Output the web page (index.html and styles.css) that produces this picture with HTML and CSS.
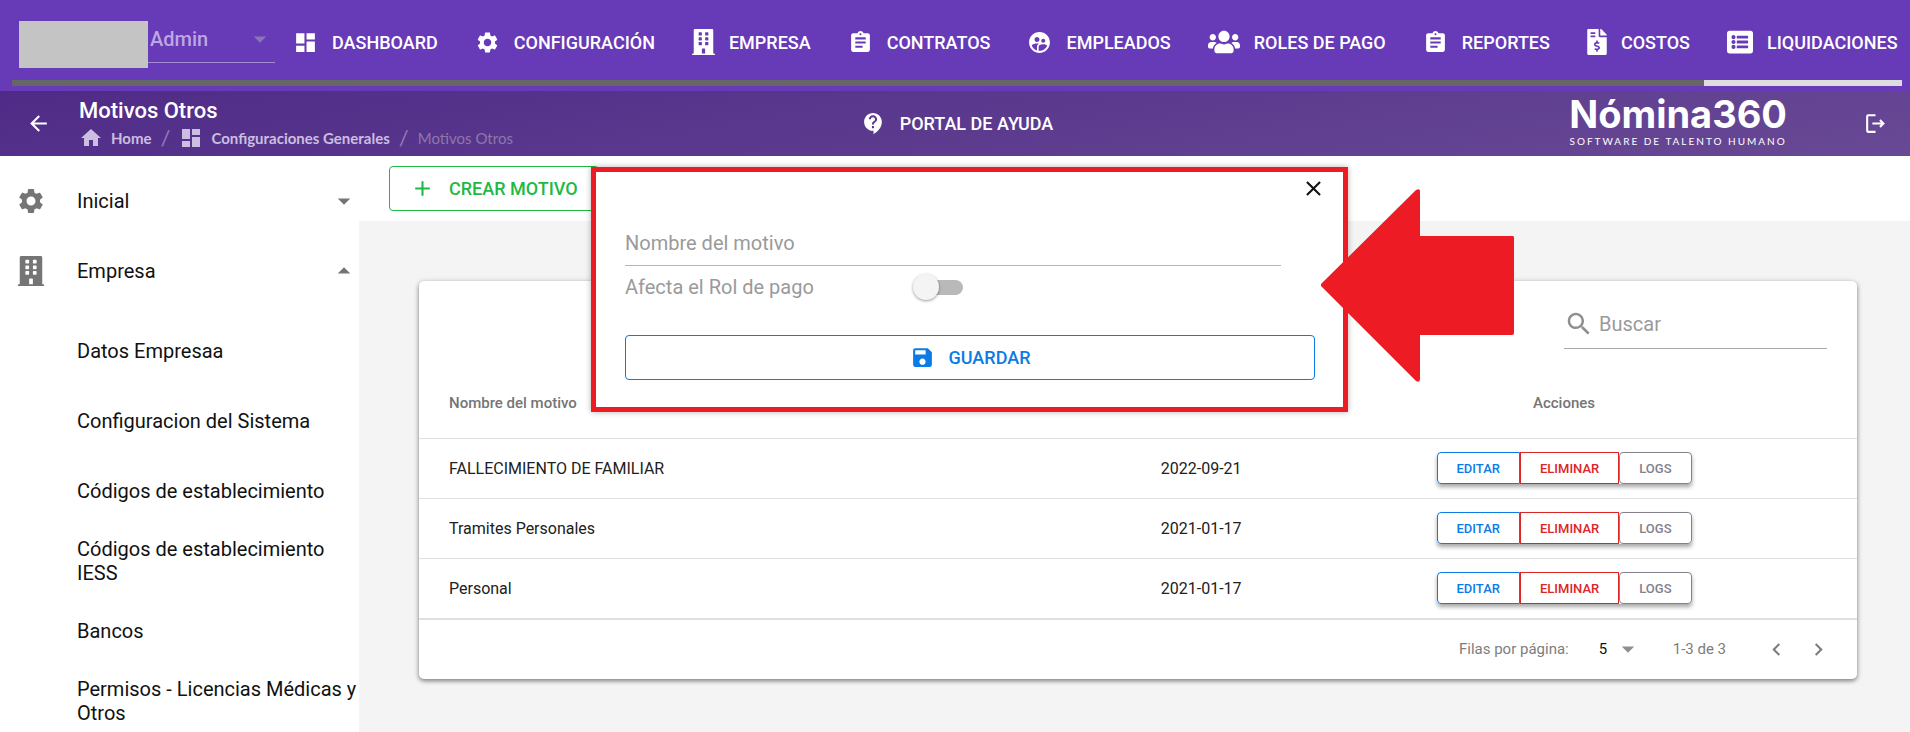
FILE: index.html
```html
<!DOCTYPE html>
<html lang="es">
<head>
  <meta charset="UTF-8">
  <meta name="viewport" content="width=device-width, initial-scale=1">
  <title>Nómina360 - Motivos Otros</title>
  <link rel="stylesheet" href="styles.css">
</head>
<body>
  <!-- shared icons -->
  <svg class="sprite" aria-hidden="true">
    <symbol id="i-dashboard" viewBox="0 0 24 24"><path d="M3 13h8V3H3v10zm0 8h8v-6H3v6zm10 0h8V11h-8v10zm0-18v6h8V3h-8z"/></symbol>
    <symbol id="i-settings" viewBox="0 0 24 24"><path d="M19.14 12.94c.04-.3.06-.61.06-.94 0-.32-.02-.64-.07-.94l2.03-1.58c.18-.14.23-.41.12-.61l-1.92-3.32c-.12-.22-.37-.29-.59-.22l-2.39.96c-.5-.38-1.03-.7-1.62-.94l-.36-2.54c-.04-.24-.24-.41-.48-.41h-3.84c-.24 0-.43.17-.47.41l-.36 2.54c-.59.24-1.13.57-1.62.94l-2.39-.96c-.22-.08-.47 0-.59.22L2.74 8.87c-.12.21-.08.47.12.61l2.03 1.58c-.05.3-.09.63-.09.94s.02.64.07.94l-2.03 1.58c-.18.14-.23.41-.12.61l1.92 3.32c.12.22.37.29.59.22l2.39-.96c.5.38 1.03.7 1.62.94l.36 2.54c.05.24.24.41.48.41h3.84c.24 0 .44-.17.47-.41l.36-2.54c.59-.24 1.13-.56 1.62-.94l2.39.96c.22.08.47 0 .59-.22l1.92-3.32c.12-.22.07-.47-.12-.61l-2.01-1.58zM12 15.6c-1.98 0-3.6-1.62-3.6-3.6s1.62-3.6 3.6-3.6 3.6 1.62 3.6 3.6-1.62 3.6-3.6 3.6z"/></symbol>
    <symbol id="i-building" viewBox="0 0 448 512"><path d="M436 480h-20V24c0-13.255-10.745-24-24-24H56C42.745 0 32 10.745 32 24v456H12c-6.627 0-12 5.373-12 12v20h448v-20c0-6.627-5.373-12-12-12zM128 76c0-6.627 5.373-12 12-12h40c6.627 0 12 5.373 12 12v40c0 6.627-5.373 12-12 12h-40c-6.627 0-12-5.373-12-12V76zm0 96c0-6.627 5.373-12 12-12h40c6.627 0 12 5.373 12 12v40c0 6.627-5.373 12-12 12h-40c-6.627 0-12-5.373-12-12v-40zm52 148h-40c-6.627 0-12-5.373-12-12v-40c0-6.627 5.373-12 12-12h40c6.627 0 12 5.373 12 12v40c0 6.627-5.373 12-12 12zm76 160h-64v-84c0-6.627 5.373-12 12-12h40c6.627 0 12 5.373 12 12v84zm64-172c0 6.627-5.373 12-12 12h-40c-6.627 0-12-5.373-12-12v-40c0-6.627 5.373-12 12-12h40c6.627 0 12 5.373 12 12v40zm0-96c0 6.627-5.373 12-12 12h-40c-6.627 0-12-5.373-12-12v-40c0-6.627 5.373-12 12-12h40c6.627 0 12 5.373 12 12v40zm0-96c0 6.627-5.373 12-12 12h-40c-6.627 0-12-5.373-12-12V76c0-6.627 5.373-12 12-12h40c6.627 0 12 5.373 12 12v40z"/></symbol>
    <symbol id="i-assignment" viewBox="0 0 24 24"><path d="M19 3h-4.180C14.400 1.840 13.300 1 12 1c-1.300 0-2.400.840-2.820 2H5c-1.100 0-2 .9-2 2v14c0 1.100.9 2 2 2h14c1.100 0 2-.9 2-2V5c0-1.100-.9-2-2-2zm-7 0c.55 0 1 .45 1 1s-.45 1-1 1-1-.45-1-1 .45-1 1-1zm2 14H7v-2h7v2zm3-4H7v-2h10v2zm0-4H7V7h10v2z"/></symbol>
    <symbol id="i-supervised" viewBox="0 0 24 24"><path d="M11.990 2c-5.520 0-10 4.480-10 10s4.480 10 10 10 10-4.480 10-10-4.480-10-10-10zm3.610 6.340c1.070 0 1.930.860 1.930 1.930s-.860 1.930-1.930 1.930-1.930-.860-1.930-1.930c-.010-1.070.860-1.930 1.930-1.930zm-6-1.580c1.300 0 2.360 1.060 2.360 2.360s-1.060 2.360-2.360 2.360-2.360-1.060-2.360-2.360c0-1.310 1.050-2.360 2.360-2.360zm0 9.130v3.750c-2.400-.75-4.300-2.600-5.140-4.960 1.050-1.120 3.670-1.690 5.140-1.690.530 0 1.200.080 1.900.220-1.640.870-1.900 2.020-1.900 2.680zM11.990 20c-.270 0-.530-.010-.790-.040v-4.070c0-1.420 2.940-2.130 4.400-2.130 1.070 0 2.920.390 3.840 1.150-1.170 2.970-4.060 5.090-7.450 5.090z"/></symbol>
    <symbol id="i-users" viewBox="0 0 640 512"><path d="M96 224c35.300 0 64-28.700 64-64s-28.700-64-64-64-64 28.700-64 64 28.700 64 64 64zm448 0c35.300 0 64-28.700 64-64s-28.700-64-64-64-64 28.700-64 64 28.700 64 64 64zm32 32h-64c-17.600 0-33.500 7.100-45.100 18.600 40.300 22.100 68.900 62 75.100 109.400h66c17.700 0 32-14.300 32-32v-32c0-35.300-28.700-64-64-64zm-256 0c61.900 0 112-50.100 112-112S381.900 32 320 32 208 82.100 208 144s50.100 112 112 112zm76.800 32h-8.300c-20.800 10-43.900 16-68.500 16s-47.600-6-68.500-16h-8.300C179.600 288 128 339.600 128 403.200V432c0 26.500 21.500 48 48 48h288c26.500 0 48-21.500 48-48v-28.800c0-63.600-51.600-115.200-115.200-115.200zm-223.700-13.400C161.500 263.100 145.600 256 128 256H64c-35.300 0-64 28.700-64 64v32c0 17.700 14.300 32 32 32h65.900c6.300-47.400 34.900-87.300 75.200-109.400z"/></symbol>
    <symbol id="i-invoice" viewBox="0 0 384 512"><path d="M377 105L279.100 7c-4.500-4.500-10.600-7-17-7H256v128h128v-6.100c0-6.300-2.500-12.400-7-16.900zm-153 31V0H24C10.700 0 0 10.700 0 24v464c0 13.300 10.700 24 24 24h336c13.300 0 24-10.700 24-24V160H248c-13.200 0-24-10.800-24-24zM64 72c0-4.420 3.580-8 8-8h80c4.420 0 8 3.580 8 8v16c0 4.420-3.580 8-8 8H72c-4.420 0-8-3.580-8-8V72zm0 80v-16c0-4.420 3.580-8 8-8h80c4.420 0 8 3.580 8 8v16c0 4.420-3.580 8-8 8H72c-4.420 0-8-3.580-8-8zm144 263.880V440c0 4.420-3.580 8-8 8h-16c-4.420 0-8-3.580-8-8v-24.290c-11.290-.58-22.270-4.520-31.370-11.350-3.900-2.930-4.100-8.770-.57-12.140l11.750-11.210c2.770-2.640 6.890-2.760 10.130-.73 3.870 2.420 8.260 3.720 12.820 3.720h28.110c6.500 0 11.800-5.920 11.800-13.190 0-5.950-3.610-11.190-8.770-12.730l-45-13.500c-18.590-5.580-31.580-23.420-31.580-43.390 0-24.520 19.050-44.440 42.670-45.070V232c0-4.420 3.580-8 8-8h16c4.420 0 8 3.580 8 8v24.290c11.290.58 22.270 4.510 31.370 11.350 3.900 2.930 4.100 8.770.57 12.140l-11.750 11.210c-2.770 2.640-6.890 2.760-10.130.73-3.870-2.430-8.260-3.720-12.820-3.720h-28.110c-6.500 0-11.800 5.920-11.800 13.190 0 5.950 3.610 11.190 8.770 12.730l45 13.500c18.590 5.580 31.580 23.420 31.580 43.390 0 24.530-19.050 44.440-42.670 45.070z"/></symbol>
    <symbol id="i-listalt" viewBox="0 0 512 512"><path d="M464 480H48c-26.510 0-48-21.490-48-48V80c0-26.510 21.490-48 48-48h416c26.510 0 48 21.490 48 48v352c0 26.510-21.490 48-48 48zM128 120c-22.091 0-40 17.909-40 40s17.909 40 40 40 40-17.909 40-40-17.909-40-40-40zm0 96c-22.091 0-40 17.909-40 40s17.909 40 40 40 40-17.909 40-40-17.909-40-40-40zm0 96c-22.091 0-40 17.909-40 40s17.909 40 40 40 40-17.909 40-40-17.909-40-40-40zm288-136v-32c0-6.627-5.373-12-12-12H204c-6.627 0-12 5.373-12 12v32c0 6.627 5.373 12 12 12h200c6.627 0 12-5.373 12-12zm0 96v-32c0-6.627-5.373-12-12-12H204c-6.627 0-12 5.373-12 12v32c0 6.627 5.373 12 12 12h200c6.627 0 12-5.373 12-12zm0 96v-32c0-6.627-5.373-12-12-12H204c-6.627 0-12 5.373-12 12v32c0 6.627 5.373 12 12 12h200c6.627 0 12-5.373 12-12z"/></symbol>
    <symbol id="i-back" viewBox="0 0 24 24"><path d="M20 11H7.830l5.590-5.590L12 4l-8 8 8 8 1.410-1.410L7.830 13H20v-2z"/></symbol>
    <symbol id="i-home" viewBox="0 0 24 24"><path d="M10 20v-6h4v6h5v-8h3L12 3 2 12h3v8z"/></symbol>
    <symbol id="i-help" viewBox="0 0 24 24"><path d="M11.500 2C6.810 2 3 5.810 3 10.500S6.810 19 11.500 19h.5v3c4.860-2.340 8-7 8-11.500C20 5.810 16.190 2 11.500 2zm1 14.500h-2v-2h2v2zm0-3.500h-2c0-3.250 3-3 3-5 0-1.100-.9-2-2-2s-2 .9-2 2h-2c0-2.210 1.790-4 4-4s4 1.790 4 4c0 2.500-3 2.750-3 5z"/></symbol>
    <symbol id="i-logout" viewBox="0 0 24 24"><path d="M17 8l-1.410 1.410L17.170 11H9v2h8.170l-1.580 1.580L17 16l4-4zM5 5h7V3H5c-1.100 0-2 .9-2 2v14c0 1.100.9 2 2 2h7v-2H5V5z"/></symbol>
    <symbol id="i-down" viewBox="0 0 24 24"><path d="M7 10l5 5 5-5z"/></symbol>
    <symbol id="i-up" viewBox="0 0 24 24"><path d="M7 14l5-5 5 5z"/></symbol>
    <symbol id="i-add" viewBox="0 0 24 24"><path d="M19 13h-6v6h-2v-6H5v-2h6V5h2v6h6v2z"/></symbol>
    <symbol id="i-close" viewBox="0 0 24 24"><path d="M19 6.410L17.590 5 12 10.590 6.410 5 5 6.410 10.590 12 5 17.590 6.410 19 12 13.410 17.590 19 19 17.590 13.410 12z"/></symbol>
    <symbol id="i-save" viewBox="0 0 24 24"><path d="M17 3H5c-1.110 0-2 .9-2 2v14c0 1.100.890 2 2 2h14c1.100 0 2-.9 2-2V7l-4-4zm-5 16c-1.660 0-3-1.340-3-3s1.340-3 3-3 3 1.340 3 3-1.340 3-3 3zm3-10H5V5h10v4z"/></symbol>
    <symbol id="i-search" viewBox="0 0 24 24"><path d="M15.500 14h-.790l-.280-.270C15.410 12.590 16 11.110 16 9.500 16 5.910 13.090 3 9.500 3S3 5.910 3 9.500 5.910 16 9.500 16c1.610 0 3.090-.590 4.230-1.570l.270.280v.790l5 4.990L20.490 19l-4.990-5zm-6 0C7.010 14 5 11.990 5 9.500S7.010 5 9.500 5 14 7.010 14 9.500 11.990 14 9.500 14z"/></symbol>
    <symbol id="i-left" viewBox="0 0 24 24"><path d="M15.410 7.410L14 6l-6 6 6 6 1.410-1.410L10.830 12z"/></symbol>
    <symbol id="i-right" viewBox="0 0 24 24"><path d="M10 6L8.590 7.410 13.170 12l-4.580 4.590L10 18l6-6z"/></symbol>
  </svg>

  <header>
    <div class="topbar">
      <div class="company">
        <span class="company-name"></span>
        <div class="select-wrap">
          <select class="role-select" aria-label="Rol" disabled><option>Admin</option></select>
          <svg class="icon caret"><use href="#i-down"/></svg>
        </div>
      </div>
      <nav class="menu">
        <a href="#"><svg class="icon"><use href="#i-dashboard"/></svg>DASHBOARD</a>
        <a href="#"><svg class="icon"><use href="#i-settings"/></svg>CONFIGURACIÓN</a>
        <a href="#"><svg class="icon fa-building"><use href="#i-building"/></svg>EMPRESA</a>
        <a href="#"><svg class="icon"><use href="#i-assignment"/></svg>CONTRATOS</a>
        <a href="#"><svg class="icon"><use href="#i-supervised"/></svg>EMPLEADOS</a>
        <a href="#"><svg class="icon fa-users"><use href="#i-users"/></svg>ROLES DE PAGO</a>
        <a href="#"><svg class="icon"><use href="#i-assignment"/></svg>REPORTES</a>
        <a href="#"><svg class="icon fa-invoice"><use href="#i-invoice"/></svg>COSTOS</a>
        <a href="#"><svg class="icon fa-list"><use href="#i-listalt"/></svg>LIQUIDACIONES</a>
      </nav>
    </div>
    <div class="scroll-track"><div class="scroll-thumb"></div></div>

    <div class="subbar">
      <div class="left">
        <button class="icon-btn" aria-label="Volver"><svg class="icon"><use href="#i-back"/></svg></button>
        <div class="heading">
          <h1>Motivos Otros</h1>
          <nav class="breadcrumb">
            <a href="#"><svg class="icon"><use href="#i-home"/></svg>Home</a>
            <span class="sep">/</span>
            <a href="#"><svg class="icon"><use href="#i-dashboard"/></svg>Configuraciones Generales</a>
            <span class="sep">/</span>
            <span class="current">Motivos Otros</span>
          </nav>
        </div>
      </div>
      <a class="help" href="#"><svg class="icon"><use href="#i-help"/></svg>PORTAL DE AYUDA</a>
      <div class="right">
        <div class="logo">
          <span class="logo-name">Nómina360</span>
          <span class="logo-tag">SOFTWARE DE TALENTO HUMANO</span>
        </div>
        <button class="icon-btn" aria-label="Salir"><svg class="icon"><use href="#i-logout"/></svg></button>
      </div>
    </div>
  </header>

  <div class="layout">
    <aside class="sidebar">
      <button class="group"><svg class="icon"><use href="#i-settings"/></svg><span>Inicial</span><svg class="icon caret"><use href="#i-down"/></svg></button>
      <button class="group"><svg class="icon"><use href="#i-building"/></svg><span>Empresa</span><svg class="icon caret"><use href="#i-up"/></svg></button>
      <ul>
        <li><a href="#">Datos Empresaa</a></li>
        <li><a href="#">Configuracion del Sistema</a></li>
        <li><a href="#">Códigos de establecimiento</a></li>
        <li><a href="#">Códigos de establecimiento IESS</a></li>
        <li><a href="#">Bancos</a></li>
        <li><a href="#">Permisos - Licencias Médicas y Otros</a></li>
      </ul>
    </aside>

    <main>
      <div class="toolbar">
        <button class="btn create"><svg class="icon"><use href="#i-add"/></svg>CREAR MOTIVO</button>
      </div>
      <section class="card">
        <div class="card-head">
          <label class="search">
            <svg class="icon"><use href="#i-search"/></svg>
            <input type="text" placeholder="Buscar" aria-label="Buscar">
          </label>
        </div>
        <table>
          <thead>
            <tr><th class="col-name">Nombre del motivo</th><th class="col-date"></th><th class="col-actions">Acciones</th></tr>
          </thead>
          <tbody>
            <tr>
              <td>FALLECIMIENTO DE FAMILIAR</td>
              <td>2022-09-21</td>
              <td><div class="btn-group"><button class="edit">EDITAR</button><button class="delete">ELIMINAR</button><button class="logs">LOGS</button></div></td>
            </tr>
            <tr>
              <td>Tramites Personales</td>
              <td>2021-01-17</td>
              <td><div class="btn-group"><button class="edit">EDITAR</button><button class="delete">ELIMINAR</button><button class="logs">LOGS</button></div></td>
            </tr>
            <tr>
              <td>Personal</td>
              <td>2021-01-17</td>
              <td><div class="btn-group"><button class="edit">EDITAR</button><button class="delete">ELIMINAR</button><button class="logs">LOGS</button></div></td>
            </tr>
          </tbody>
        </table>
        <div class="pagination">
          <label for="rows">Filas por página:</label>
          <div class="select-wrap">
            <select id="rows"><option>5</option><option>10</option><option>25</option></select>
            <svg class="icon caret"><use href="#i-down"/></svg>
          </div>
          <span class="range">1-3 de 3</span>
          <button class="icon-btn" aria-label="Anterior"><svg class="icon"><use href="#i-left"/></svg></button>
          <button class="icon-btn" aria-label="Siguiente"><svg class="icon"><use href="#i-right"/></svg></button>
        </div>
      </section>
    </main>
  </div>

  <div class="modal" role="dialog" aria-label="Crear motivo">
    <button class="icon-btn close" aria-label="Cerrar"><svg class="icon"><use href="#i-close"/></svg></button>
    <form>
      <input class="name-input" type="text" placeholder="Nombre del motivo" aria-label="Nombre del motivo">
      <div class="switch-row">
        <label for="afecta">Afecta el Rol de pago</label>
        <input id="afecta" class="switch" type="checkbox">
      </div>
      <button class="btn save" type="button"><svg class="icon"><use href="#i-save"/></svg>GUARDAR</button>
    </form>
    <svg class="arrow" viewBox="0 0 193 193" aria-hidden="true"><path d="M0 95L95 1Q99 -1 99 2V47H192Q193 47 193 49V144Q193 146 191 146H99V190Q99 194 95 192L0 97z"/></svg>
  </div>
</body>
</html>
```
FILE: styles.css
```css
* {
  box-sizing: border-box;
}
body {
  margin: 0;
  min-height: 100vh;
  display: flex;
  flex-direction: column;
  font-family: Roboto, "Liberation Sans", sans-serif;
  font-size: 16px;
  color: #212121;
  background: #f4f4f4;
  overflow: hidden;
}
a {
  color: inherit;
  text-decoration: none;
}
button, input, select {
  font: inherit;
  color: inherit;
  margin: 0;
  padding: 0;
  border: 0;
  background: none;
}
button {
  cursor: pointer;
}
.sprite {
  display: none;
}
.icon {
  width: 25px;
  height: 25px;
  flex: none;
  fill: currentColor;
}
.icon-btn {
  display: flex;
}

/* top bar */
.topbar {
  display: flex;
  align-items: flex-start;
  height: 80px;
  padding-left: 19px;
  background: #673ab7;
  color: #fff;
}
.company {
  display: flex;
  margin-top: 21px;
  margin-right: 18px;
  flex: none;
}
.company-name {
  width: 129px;
  height: 47px;
  background: #c4c4c4;
}
.select-wrap {
  position: relative;
  display: flex;
  align-items: center;
}
.select-wrap .caret {
  position: absolute;
  right: 0;
  width: 30px;
  height: 30px;
  pointer-events: none;
}
select {
  appearance: none;
  opacity: 1;
}
.role-select {
  width: 127px;
  height: 42px;
  padding: 0 0 6px 2px;
  border-bottom: 1px solid #a48bd0;
  font-size: 20px;
  font-weight: 500;
  color: #bda7e2;
}
.role-select:disabled {
  opacity: 1;
}
.company .select-wrap {
  height: 42px;
}
.company .caret {
  top: 3px;
  color: #8c75b4;
}
.menu {
  display: flex;
  gap: 37px;
  height: 84px;
}
.menu a {
  display: flex;
  align-items: center;
  gap: 14px;
  font-size: 18px;
  font-weight: 500;
  white-space: nowrap;
}
.fa-building {
  width: 23px;
  height: 26px;
}
.fa-users {
  width: 32px;
  height: 26px;
}
.fa-invoice {
  width: 20px;
  height: 26px;
}
.fa-list {
  width: 26px;
  height: 26px;
}
.scroll-track {
  height: 11px;
  padding: 0 8px 5px 12px;
  background: linear-gradient(#ddd, #ddd) content-box, #673ab7;
}
.scroll-thumb {
  width: 89.5%;
  height: 6px;
  background: #666;
}

/* title bar */
.subbar {
  display: grid;
  grid-template-columns: 1fr auto 1fr;
  align-items: center;
  height: 65px;
  padding: 0 22px 0 26px;
  color: #fff;
  background: linear-gradient(170deg, #4f2b87, #684995);
}
.left {
  display: flex;
  align-items: center;
  gap: 28px;
}
.heading h1 {
  margin: 0;
  font-size: 22px;
  line-height: 28px;
  font-weight: 500;
}
.breadcrumb {
  display: flex;
  align-items: center;
  gap: 9px;
  font-family: Lato, sans-serif;
  font-size: 15px;
  line-height: 26px;
  color: #cbbee0;
}
.breadcrumb a {
  display: flex;
  align-items: center;
  gap: 8px;
  font-weight: 700;
}
.breadcrumb .icon {
  width: 24px;
  height: 24px;
}
.breadcrumb .sep {
  font-size: 22px;
  color: #917bb5;
}
.breadcrumb .current {
  color: #8d78ac;
}
.help {
  display: flex;
  align-items: center;
  gap: 14px;
  font-size: 18px;
  font-weight: 500;
}
.right {
  display: flex;
  justify-content: flex-end;
  align-items: center;
  gap: 76px;
}
.logo {
  display: flex;
  flex-direction: column;
  align-items: center;
  padding-bottom: 4px;
}
.logo-name {
  font-family: Inter, sans-serif;
  font-size: 38px;
  line-height: 38px;
  font-weight: 700;
}
.logo-tag {
  font-family: Lato, sans-serif;
  font-size: 10px;
  line-height: 16px;
  letter-spacing: 2px;
}

/* sidebar */
.layout {
  display: flex;
  flex: 1;
}
.sidebar {
  width: 359px;
  flex: none;
  padding-top: 10px;
  background: #fff;
  font-size: 20px;
  line-height: 24px;
  color: #111;
}
.group {
  display: flex;
  align-items: center;
  width: 100%;
  height: 70px;
  text-align: left;
}
.group .icon {
  width: 30px;
  height: 30px;
  color: #757575;
  margin-left: 16px;
}
.group span {
  flex: 1;
  margin-left: 31px;
}
.group .caret {
  margin: 0;
}
.sidebar ul {
  list-style: none;
  margin: 0;
  padding: 10px 0 0 77px;
}
.sidebar li {
  display: flex;
  align-items: center;
  min-height: 70px;
  padding: 11px 0;
}

/* content */
main {
  flex: 1;
}
.toolbar {
  height: 65px;
  padding: 10px 30px;
  background: #fff;
}
.btn {
  display: flex;
  align-items: center;
  justify-content: center;
  gap: 14px;
  height: 45px;
  border: 1px solid;
  border-radius: 4px;
  font-size: 18px;
  font-weight: 500;
}
.create {
  padding: 0 20px;
  color: #1fb943;
}
.card {
  margin: 60px 53px 0 60px;
  background: #fff;
  border-radius: 5px;
  box-shadow: 0 2px 4px rgba(0, 0, 0, .4), 0 1px 6px rgba(0, 0, 0, .15);
}
.card-head {
  display: flex;
  justify-content: flex-end;
  height: 86px;
  padding: 18px 30px 0;
}
.search {
  display: flex;
  align-items: center;
  gap: 5px;
  width: 263px;
  height: 50px;
  border-bottom: 1px solid #aaa;
  color: #8f8f8f;
}
.search .icon {
  width: 30px;
  height: 30px;
}
.search input {
  flex: 1;
  min-width: 0;
  font-size: 20px;
}
input::placeholder {
  color: #9a9a9a;
  opacity: 1;
}
input:focus {
  outline: none;
}
table {
  width: 100%;
  border-collapse: collapse;
  table-layout: fixed;
}
th, td {
  height: 60px;
  padding: 0 30px;
  border-bottom: 1px solid #e0e0e0;
  text-align: left;
  white-space: nowrap;
}
th {
  height: 71px;
  padding-top: 2px;
  font-size: 15px;
  font-weight: 500;
  color: #757575;
}
.col-date {
  width: 9.75%;
}
.col-actions {
  width: 40.75%;
  text-align: center;
}
.btn-group {
  display: flex;
  width: fit-content;
  margin: 0 auto;
  border-radius: 4px;
  box-shadow: 0 3px 4px rgba(0, 0, 0, .35);
}
.btn-group button {
  height: 32px;
  padding: 0 19px;
  border: 1px solid;
  font-size: 13px;
  font-weight: 500;
}
.btn-group .edit {
  color: #0b7be5;
  border-radius: 4px 0 0 4px;
}
.btn-group .delete {
  color: #dc2626;
}
.btn-group .logs {
  color: #85808c;
  border-radius: 4px;
}
.pagination {
  display: flex;
  align-items: center;
  justify-content: flex-end;
  height: 60px;
  padding-right: 26px;
  border-top: 1px solid #e0e0e0;
  font-size: 15px;
  color: #7d7d7d;
}
.pagination select {
  width: 42px;
  height: 30px;
  color: #111;
  padding-left: 4px;
}
.pagination .select-wrap {
  margin: 0 36px 0 26px;
}
.pagination .caret {
  right: -6px;
  color: #8f8f8f;
}
.pagination .range {
  margin-right: 38px;
}
.pagination .icon-btn + .icon-btn {
  margin-left: 17px;
}

/* dialog */
.modal {
  position: absolute;
  top: 167px;
  left: 591px;
  width: 757px;
  height: 245px;
  padding: 46px 28px 0 29px;
  border: 5px solid #ed1c24;
  background: #fff;
  box-shadow: 0 0 6px rgba(0, 0, 0, .3);
}
.close {
  position: absolute;
  top: 4px;
  right: 17px;
  color: #111;
}
.name-input {
  display: block;
  width: 656px;
  height: 48px;
  padding-top: 3px;
  border-bottom: 1px solid #b5b5b5;
  font-size: 20px;
}
.switch-row {
  display: flex;
  align-items: center;
  height: 42px;
  font-size: 20px;
  color: #9a9a9a;
}
.switch-row label {
  width: 296px;
}
.switch {
  appearance: none;
  position: relative;
  width: 42px;
  height: 15px;
  border-radius: 8px;
  background: #b9b9b9;
}
.switch::before {
  content: "";
  position: absolute;
  top: -6px;
  left: -8px;
  width: 26px;
  height: 26px;
  border-radius: 50%;
  background: #f4f4f4;
  box-shadow: 0 1px 3px rgba(0, 0, 0, .4);
}
.save {
  width: 100%;
  margin-top: 27px;
  color: #0b7be5;
}
.arrow {
  position: absolute;
  top: 17px;
  right: -171px;
  width: 193px;
  height: 193px;
  fill: #ed1c24;
}
```
